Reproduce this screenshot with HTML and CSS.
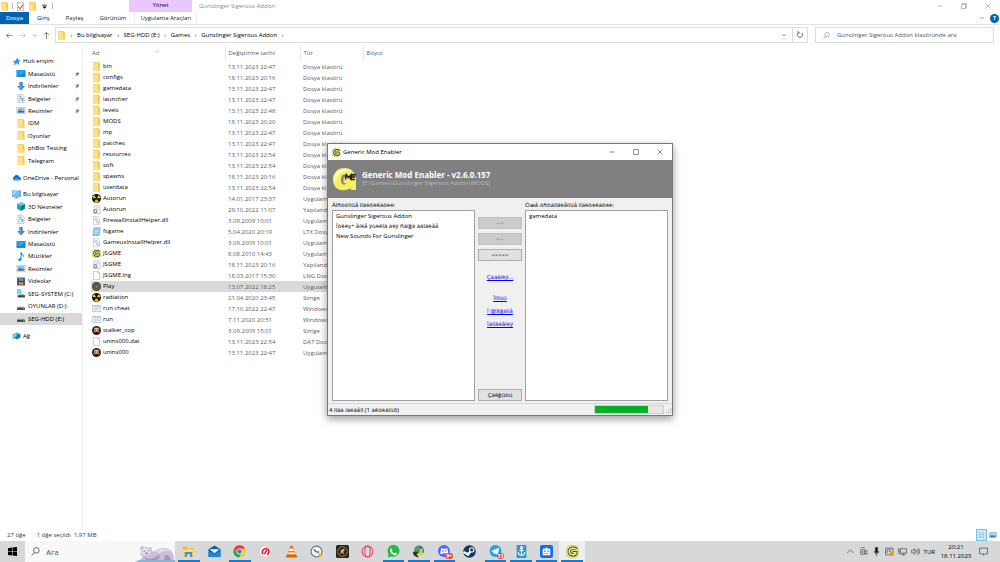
FILE: index.html
```html
<!DOCTYPE html>
<html lang="tr">
<head>
  <meta charset="UTF-8">
  <title>Gunslinger Sigerous Addon</title>
  <link rel="stylesheet" href="styles.css">
</head>
<body>
  <svg class="sprite" aria-hidden="true">
    <symbol id="folder" viewBox="0 0 16 16"><path fill="#f2c24c" d="M2 0h9l3 2v14H2z"/><path fill="#ffe08a" d="M2 1h9v15H2z"/><path fill="#ffd35c" d="M11 10h3v6h-3z"/></symbol>
    <symbol id="star" viewBox="0 0 16 16"><path fill="#2d9be0" d="M9 1l2 4 4 0-3 4 1 5-4-3-6 4 2-5-4-3 6-1z"/></symbol>
    <symbol id="desktop" viewBox="0 0 16 16"><path fill="#0a7dd1" d="M0 2h16v12H0z"/><path fill="#22a7f2" d="M1 3h14v8H1z"/><path fill="#0a8ee4" d="M8 11l7-7v7z"/></symbol>
    <symbol id="down" viewBox="0 0 16 16"><path fill="#3b82d0" d="M5 0h6v7h4l-7 8-7-8h4z"/><path fill="#64a5e8" d="M6 1h2v12L3 8h3z"/></symbol>
    <symbol id="doc" viewBox="0 0 16 16"><path fill="#fafafa" stroke="#9aa3ab" d="M2.500.5h8l3 3v12h-11z"/><path fill="#6fb1dc" d="M5 3h4v3H5zM7 7h5v6H9V9H7z"/><path stroke="#aab6c0" d="M4 8h2M4 10h3M4 12h3"/></symbol>
    <symbol id="picture" viewBox="0 0 16 16"><path fill="#fff" stroke="#9aa8b5" d="M.5 2.500h15v11H.5z"/><path fill="#7cb9e8" d="M2 4h12v4H2z"/><path fill="#3c6f9c" d="M2 9l5-2 3 2 4-1v4H2z"/></symbol>
    <symbol id="cloud" viewBox="0 0 16 16"><path fill="#0f6cbd" d="M4 13a4 4 0 010-7 5 5 0 019 1 3 3 0 010 6z"/><path fill="#2a9df0" d="M1 12l7-4 7 3-1 2H4z"/></symbol>
    <symbol id="pc" viewBox="0 0 16 16"><path fill="#6d8ca3" d="M0 1h16v11H0z"/><path fill="#65c7f7" d="M1 2h14v9H1z"/><path fill="#8fdcff" d="M1 2h9l-9 8z"/><path fill="#8a9aa5" d="M6 12h4v2h3v1H3v-1h3z"/></symbol>
    <symbol id="cube" viewBox="0 0 16 16"><path fill="#57d0e5" d="M8 0l7 3-7 4-7-4z"/><path fill="#15a3c4" d="M1 3l7 4v9l-7-4z"/><path fill="#0d6f9e" d="M15 3L8 7v9l7-4z"/></symbol>
    <symbol id="music" viewBox="0 0 16 16"><path fill="#1f95e6" d="M7 0h2c0 4 5 4 4 9h-1c0-3-2-3-3-4v8c0 4-6 4-6 1s3-3 4-3z"/></symbol>
    <symbol id="video" viewBox="0 0 16 16"><path fill="#3c4148" d="M1 1h14v14H1z"/><path fill="#5f91c9" d="M4 2h8v5H4z"/><path fill="#c98c4e" d="M4 9h8v5H4z"/><path stroke="#ddd" stroke-dasharray="1 2" d="M2.500 2v12M13.500 2v12"/></symbol>
    <symbol id="drive" viewBox="0 0 16 16"><path fill="#b8bcbf" d="M3 8h10l2 2H1z"/><path fill="#3c4246" d="M1 10h14v4H1z"/><path fill="#6be07b" d="M11 11h3v1h-3z"/></symbol>
    <symbol id="sysdrive" viewBox="0 0 16 16"><path fill="#24b2ee" d="M1 1h3v3H1zM5 1h3v3H5zM1 5h3v3H1zM5 5h3v3H5z"/><path fill="#b8bcbf" d="M4 9h9l2 2H3z"/><path fill="#3c4246" d="M2 11h13v4H2z"/></symbol>
    <symbol id="network" viewBox="0 0 16 16"><path fill="#4fa6dc" d="M1 6l8-4 2 2v8l-8 2-2-2z"/><path fill="#2479ae" d="M7 7l7-3 1 2v6l-7 3-2-2z"/><path fill="#8dd0f5" d="M2 7l6-3v5l-6 3z"/></symbol>
    <symbol id="pin" viewBox="0 0 16 16"><path fill="#7d8790" d="M9 1l6 6-2 1-3 3v3L7 11l-5 4 4-6-3-3h3l3-3z"/></symbol>
    <symbol id="rad" viewBox="0 0 16 16"><circle cx="8" cy="8" r="8" fill="#171407"/><path fill="#f2c51d" d="M8 8L1 7a7 7 0 013-5zM8 8l4-6a7 7 0 013 5zM8 8l4 6a7 7 0 01-8 0z"/><circle cx="8" cy="8" r="2" fill="#171407"/></symbol>
    <symbol id="ini" viewBox="0 0 16 16"><path fill="#fafafa" stroke="#a5a5a5" d="M3.500.5h8l3 3v12h-11z"/><circle cx="6" cy="11" r="3" fill="#ddd" stroke="#8c9195" stroke-width="2"/><path stroke="#b5b5b5" d="M6 4h6M8 6h4"/></symbol>
    <symbol id="dll" viewBox="0 0 16 16"><path fill="#fafafa" stroke="#a9b3bb" d="M2.500.5h8l3 3v12h-11z"/><circle cx="7" cy="6" r="2" fill="none" stroke="#7ea0b8"/><circle cx="10" cy="11" r="2" fill="none" stroke="#7ea0b8"/></symbol>
    <symbol id="ltx" viewBox="0 0 16 16"><path fill="#8bcbe2" stroke="#5d9cb5" d="M3.500 1.500h11l-2 14h-11z"/><path stroke="#d7f2fb" d="M4 5h8M4 8h8M3 11h8"/></symbol>
    <symbol id="blank" viewBox="0 0 16 16"><path fill="#fdfdfd" stroke="#a5a5a5" d="M2.500.5h8l3 3v12h-11z"/><path fill="none" stroke="#a5a5a5" d="M10.500.5v3h3"/></symbol>
    <symbol id="play" viewBox="0 0 16 16"><circle cx="8" cy="8" r="8" fill="#4d473b"/><circle cx="8" cy="8" r="5" fill="none" stroke="#887f69"/><circle cx="8" cy="8" r="2" fill="#9d9276"/></symbol>
    <symbol id="bat" viewBox="0 0 16 16"><path fill="#fff" stroke="#8da0ae" d="M.5 2.500h15v11H.5z"/><path fill="#b7cad8" d="M1 3h14v2H1z"/><circle cx="6" cy="9" r="2" fill="none" stroke="#7694a8"/><path stroke="#7694a8" d="M9 7h4M10 10h3"/></symbol>
    <symbol id="stalker" viewBox="0 0 16 16"><circle cx="8" cy="8" r="8" fill="#2c1f1a"/><path fill="#e8bd9b" d="M4 3h8v6l-2 2H6L4 9z"/><path fill="#1c1614" d="M5 6h2v2H5zM9 6h2v2H9zM6 10h4v4H6z"/><path fill="#c9532c" d="M1 9h3l1 4zM12 9h3l-4 4z"/></symbol>
    <symbol id="gme" viewBox="0 0 24 24"><path fill="#f6f162" d="M12 0c6 0 10 3 11 8h-8c-1-2-5-2-6 1-1 2-1 5 0 7 1 2 4 2 5 0h-3v-6h13v13h-5l-1-2C9 26 0 22 0 12 0 5 5 0 12 0z"/><path fill="#fdfbb5" d="M12 1c4 0 7 1 9 4-5-3-12-2-15 2-2 3-3 6-4 8C0 8 4 1 12 1z"/><path fill="none" stroke="#222" stroke-width="1.500" d="M13 12l1-5 2 3 3-3-1 5M24 7h-4l-1 5h4M20 9.500h3"/></symbol>
    <symbol id="gmeapp" viewBox="0 0 24 24"><rect x="1" y="1" width="22" height="22" rx="7" fill="#f3ef55" stroke="#b9b65a"/><path fill="none" stroke="#444" stroke-width="6" d="M19 8c-3-4-13-3-13 4s10 8 12 4v-2h-6"/><path fill="none" stroke="#fffcb0" stroke-width="2.500" d="M18 8c-3-3-12-3-12 4s10 7 12 4v-2h-5"/></symbol>
    <symbol id="win" viewBox="0 0 16 16"><path d="M0 2l7-1v7H0zM8 1l8-1v8H8zM0 9h7v6l-7-1zM8 9h8v7l-8-1z"/></symbol>
    <symbol id="lens" viewBox="0 0 16 16"><circle cx="9.500" cy="6" r="5" fill="none" stroke="currentColor"/><path stroke="currentColor" d="M6 10l-5 5"/></symbol>
    <symbol id="explorer" viewBox="0 0 24 24"><path fill="#f5b92e" d="M1 3h8l2 3h12v15H1z"/><path fill="#ffdd76" d="M1 8h22v13H1z"/><path fill="#3795da" d="M5 13h14v9h-4v-5H9v5H5z"/></symbol>
    <symbol id="mail" viewBox="0 0 24 24"><path fill="#0c5faa" d="M1 8l11-7 11 7v14H1z"/><path fill="#fff" d="M3 8h18l-9 7z"/><path fill="#1b86d8" d="M1 9l11 8 11-8v13H1z"/></symbol>
    <symbol id="chrome" viewBox="0 0 24 24"><circle cx="12" cy="12" r="11" fill="#f6c72c"/><path fill="#e23f32" d="M2 7a11 11 0 0120 0H12L8 14z"/><path fill="#2fa24f" d="M2 7a11 11 0 009 16l5-9-7 1z"/><circle cx="12" cy="12" r="5.500" fill="#fff"/><circle cx="12" cy="12" r="4.200" fill="#3479e4"/></symbol>
    <symbol id="redapp" viewBox="0 0 24 24"><circle cx="12" cy="12" r="10" fill="#fff" stroke="#f0c5ca"/><path fill="none" stroke="#d71f35" stroke-width="3" d="M7 17c-3-7 2-11 9-11M10 17l5-9M15 18c4-3 4-7 2-11"/></symbol>
    <symbol id="vlc" viewBox="0 0 24 24"><path fill="#ee7d13" d="M10 1h4l6 18H4z"/><path fill="#fff" d="M8.500 7h7l1 4h-9zM6.500 14h11l1 3h-13z"/><path fill="#d96508" d="M3 18h18l2 5H1z"/></symbol>
    <symbol id="clock" viewBox="0 0 24 24"><circle cx="12" cy="12" r="10" fill="#f4f8fa" stroke="#56718a" stroke-width="2"/><path fill="none" stroke="#333" stroke-width="2" d="M7 8l5 5h5"/><path fill="#efb32c" d="M16 14l7 5-5 5-3-4z"/></symbol>
    <symbol id="knight" viewBox="0 0 24 24"><rect width="24" height="24" rx="3" fill="#29231c"/><circle cx="12" cy="12" r="9" fill="none" stroke="#aa9564" stroke-width="1.500"/><path fill="#cbb77f" d="M8 8l3 1 4-3 1 4-3 3 3 4h-2l-3-3-4 4 2-6z"/></symbol>
    <symbol id="opera" viewBox="0 0 24 24"><circle cx="12" cy="12" r="10" fill="none" stroke="#e84c6c" stroke-width="2"/><ellipse cx="12" cy="12" rx="5" ry="10" fill="none" stroke="#e84c6c" stroke-width="2"/></symbol>
    <symbol id="whatsapp" viewBox="0 0 24 24"><path fill="#28b94b" d="M1 23l2-6a11 11 0 115 4z"/><path fill="#fff" d="M8 6l2 4-1 2 4 4 2-2 4 2-2 3C11 20 5 14 6 8z"/></symbol>
    <symbol id="idm" viewBox="0 0 24 24"><circle cx="13" cy="10" r="9" fill="#2a73bd"/><path fill="#56a53a" d="M5 6l7-5 3 5-5 5-6 2zM16 9l6-2-1 8-6 4z"/><path fill="#253329" d="M1 14l6-2 7 5-3 6-7-3z"/><path fill="#f5d231" d="M14 8l6-2-2 7 3 2-9 6-4-4 6-3z"/></symbol>
    <symbol id="discord" viewBox="0 0 24 24"><circle cx="11" cy="11" r="11" fill="#5865f2"/><path fill="#fff" d="M6 6l4 1h3l4-1 2 9-4 2-1-2H9l-1 2-4-2z"/><circle cx="9" cy="11" r="1.500" fill="#5865f2"/><circle cx="14" cy="11" r="1.500" fill="#5865f2"/></symbol>
    <symbol id="steam" viewBox="0 0 24 24"><circle cx="12" cy="12" r="11.500" fill="#12395f"/><circle cx="16" cy="9" r="4" fill="none" stroke="#fff" stroke-width="2"/><path fill="none" stroke="#fff" stroke-width="4" d="M1 13l8 4 5-5"/><circle cx="9" cy="17" r="3" fill="#fff"/></symbol>
    <symbol id="telegram" viewBox="0 0 24 24"><circle cx="12" cy="11" r="11" fill="#2ba1dd"/><path fill="#fff" d="M4 11l15-6-3 13-5-3-2 2-1-4z"/></symbol>
    <symbol id="anchor" viewBox="0 0 24 24"><path fill="#2b9bd6" d="M3 0h18v24H3z"/><circle cx="12" cy="5" r="2" fill="none" stroke="#fff" stroke-width="2"/><path fill="none" stroke="#fff" stroke-width="2" d="M12 7v12M8 10h8M6 13c0 8 12 8 12 0"/></symbol>
    <symbol id="bot" viewBox="0 0 24 24"><rect width="24" height="24" rx="4" fill="#176bea"/><path fill="#fff" d="M5 7h4l1-2h4l1 2h4v12H5z"/><path fill="#176bea" d="M8 10h2v3H8zM14 10h2v3h-2zM8 15h8v1H8z"/></symbol>
  </svg>

  <main class="explorer">
    <header class="titlebar">
      <div class="quick">
        <svg><use href="#folder"/></svg><i></i>
        <svg viewBox="0 0 16 16"><path fill="#fff" stroke="#888" d="M2.500 1.500h11v14h-11z"/><path fill="none" stroke="#e0563a" stroke-width="2" d="M4 8l3 4 5-7"/></svg>
        <svg><use href="#folder"/></svg>
        <svg viewBox="0 0 16 16"><path d="M4 5h8v1H4zM4 8h8l-4 4z"/></svg><i></i>
      </div>
      <div class="context">Yönet</div>
      <div class="title">Gunslinger Sigerous Addon</div>
      <div class="winbuttons">
        <button aria-label="Simge durumuna küçült"><svg viewBox="0 0 12 12"><path d="M1 6h10"/></svg></button>
        <button aria-label="Önceki boyut"><svg viewBox="0 0 12 12"><path d="M1 3h8v8H1zM3 3V1h8v8H9"/></svg></button>
        <button aria-label="Kapat"><svg viewBox="0 0 12 12"><path d="M1 1l10 10M11 1L1 11"/></svg></button>
      </div>
    </header>

    <nav class="tabs">
      <a class="file" href="#">Dosya</a>
      <a href="#">Giriş</a>
      <a href="#">Paylaş</a>
      <a href="#">Görünüm</a>
      <a class="tools" href="#">Uygulama Araçları</a>
      <span class="help"><svg viewBox="0 0 12 12"><path d="M2 4l4 4 4-4"/></svg><b>?</b></span>
    </nav>

    <div class="addressrow">
      <div class="arrows">
        <button aria-label="Geri"><svg viewBox="0 0 12 12"><path d="M11 6H1M5 2L1 6l4 4"/></svg></button>
        <button aria-label="İleri" disabled><svg viewBox="0 0 12 12"><path d="M1 6h10M7 2l4 4-4 4"/></svg></button>
        <button class="small" aria-label="Son konumlar"><svg viewBox="0 0 12 12"><path d="M2 4l4 4 4-4"/></svg></button>
        <button aria-label="Yukarı"><svg viewBox="0 0 12 12"><path d="M6 12V1M2 5l4-4 4 4"/></svg></button>
      </div>
      <div class="address">
        <svg class="icon"><use href="#folder"/></svg><span>›</span>
        <a href="#">Bu bilgisayar</a><span>›</span>
        <a href="#">SEG-HDD (E:)</a><span>›</span>
        <a href="#">Games</a><span>›</span>
        <a href="#">Gunslinger Sigerous Addon</a><span>›</span>
        <button class="drop" aria-label="Önceki konumlar"><svg viewBox="0 0 12 12"><path d="M2 4l4 4 4-4"/></svg></button>
        <button class="refresh" aria-label="Yenile"><svg viewBox="0 0 12 12"><path d="M3 3a4 4 0 106 0M3 0v3h3"/></svg></button>
      </div>
      <label class="search">
        <svg><use href="#lens"/></svg>
        <input type="text" aria-label="Ara" placeholder="Gunslinger Sigerous Addon klasöründe ara">
      </label>
    </div>

    <div class="content">
      <nav class="sidebar" id="sidebar"></nav>
      <div class="files">
        <table>
          <thead>
            <tr><th class="name">Ad<svg viewBox="0 0 12 12"><path d="M2 8l4-4 4 4"/></svg></th><th class="date">Değiştirme tarihi</th><th class="type">Tür</th><th class="size">Boyut</th></tr>
          </thead>
          <tbody id="rows"></tbody>
        </table>
      </div>
    </div>

    <footer class="status">
      <span>27 öğe</span><span>1 öğe seçildi&nbsp; 1,97 MB</span>
      <div class="views">
        <button class="on" aria-label="Ayrıntılar"><svg viewBox="0 0 16 12"><path stroke-dasharray="4 2" d="M2 2h12M2 5h12M2 8h12M2 11h12"/></svg></button>
        <button aria-label="Büyük simgeler"><svg viewBox="0 0 16 12"><path fill="#a9d7f5" d="M1 1h14v10H1z"/><path fill="#2c6da0" d="M3 7h9v3H3z"/></svg></button>
      </div>
    </footer>
  </main>

  <section class="dialog" role="dialog" aria-label="Generic Mod Enabler">
    <header class="dlgtitle">
      <svg class="appicon"><use href="#gmeapp"/></svg>
      <span>Generic Mod Enabler</span>
      <div class="winbuttons">
        <button aria-label="Küçült"><svg viewBox="0 0 12 12"><path d="M1 6h10"/></svg></button>
        <button aria-label="Büyüt"><svg viewBox="0 0 12 12"><path d="M1 1h10v10H1z"/></svg></button>
        <button aria-label="Kapat"><svg viewBox="0 0 12 12"><path d="M1 1l10 10M11 1L1 11"/></svg></button>
      </div>
    </header>
    <div class="banner">
      <svg><use href="#gme"/></svg>
      <div><h1>Generic Mod Enabler - v2.6.0.157</h1><p>[E:\Games\Gunslinger Sigerous Addon\MODS]</p></div>
    </div>
    <div class="mods">
      <div class="pane">
        <h2>Äîñòóïíûå ìîäèôèêàöèè:</h2>
        <ul>
          <li>Gunslinger Sigerous Addon</li>
          <li>Îòêëş÷ åíèå ÿùèêîâ äëÿ ñàïğà àäîäèåå</li>
          <li>New Sounds For Gunslinger</li>
        </ul>
      </div>
      <div class="actions">
        <button disabled>--&gt;</button>
        <button disabled>&lt;--</button>
        <button>&lt;&lt;&lt;&lt;&lt;</button>
        <a class="tasks" href="#">Çàäàíèÿ...</a>
        <a href="#">Ïîìîùü</a>
        <a href="#">Î ïğîãğàììå</a>
        <a href="#">Îáíîâëåíèÿ</a>
        <button class="close">Çàêğûòü</button>
      </div>
      <div class="pane">
        <h2>Óæå óñòàíîâëåííûå ìîäèôèêàöèè:</h2>
        <ul><li>gamedata</li></ul>
      </div>
    </div>
    <footer class="dlgstatus">
      <span>4 ìîäà íàéäåíî (1 àêòèâíûõ)</span>
      <div class="progress"><div></div></div>
      <svg class="grip" viewBox="0 0 8 8"><path d="M6 2h1v1H6zM4 4h1v1H4zM6 4h1v1H6zM2 6h1v1H2zM4 6h1v1H4zM6 6h1v1H6z"/></svg>
    </footer>
  </section>

  <footer class="taskbar">
    <button class="start" aria-label="Başlat"><svg><use href="#win"/></svg></button>
    <label class="tasksearch">
      <svg class="lens"><use href="#lens"/></svg>
      <input type="text" aria-label="Windows'ta ara" placeholder="Ara">
      <svg class="bear" viewBox="0 0 80 36"><path fill="#8fb3cf" d="M0 36c14-10 58-13 80-4v4z"/><path fill="#c9bfd6" d="M10 8c2-5 6-5 8-2 4-1 7-1 9 1 4-3 8 0 6 4l4 5c12-11 32-11 38 2 3 6 4 11 2 14H24c-10 2-13-4-8-7-5-2-7-9-4-13z"/><path fill="#e2dcea" d="M13 10c5-5 15-4 19 3l-2 7c-6 4-16 3-18-3zM42 14c10-7 22-6 28 1-9-2-17 0-22 5z"/><path fill="#a496b8" d="M18 27c12 5 24 2 30-6 3 5 1 9-6 11H22zM60 22c8 0 12 5 11 10H58z"/><path fill="none" stroke="#44374f" d="M17 14l3 1M26 14l3-1M21 18h4l-2 2z"/></svg>
    </label>
    <div class="apps" id="apps"></div>
    <div class="tray">
      <svg viewBox="0 0 16 16"><path d="M2 11l6-6 6 6"/></svg>
      <svg viewBox="0 0 16 16"><path d="M3 5h7v8H3zM10 8l4-2v7l-4-2M3 2c2-2 5-2 7 0"/><circle cx="6.500" cy="9" r="1"/></svg>
      <svg viewBox="0 0 16 16"><path fill="#111" d="M6 1h4v9H6z"/><path d="M4 7c0 7 8 7 8 0M8 12v4"/></svg>
      <svg viewBox="0 0 16 16"><path d="M1 2h13v12H1zM4 11V5h7M7 8h3"/><circle class="dot" cx="12" cy="12" r="4"/></svg>
      <svg viewBox="0 0 16 16"><path d="M4 3h11v8H4zM9 11v3M6 14h7M1 2v5h3M2 7v7"/></svg>
      <svg viewBox="0 0 16 16"><path d="M1 6h2l4-3v10l-4-3H1zM9 6c1 1 1 3 0 4M11 4c2 2 2 6 0 8M13 2c3 4 3 8 0 12"/></svg>
      <span class="lang">TUR</span>
      <time>20:21<br>18.11.2023</time>
      <svg class="note" viewBox="0 0 16 16"><path d="M1 2h14v10h-4l-3 3v-3H1z"/></svg>
    </div>
  </footer>

  <script>
    const groups = [
      ["quickaccess", ["star", "Hızlı erişim"], ["desktop", "Masaüstü", 1], ["down", "İndirilenler", 1], ["doc", "Belgeler", 1], ["picture", "Resimler", 1], ["folder", "IDM"], ["folder", "Oyunlar"], ["folder", "phBot Testing"], ["folder", "Telegram"]],
      ["single", ["cloud", "OneDrive - Personal"]],
      ["computer", ["pc", "Bu bilgisayar"], ["cube", "3D Nesneler"], ["doc", "Belgeler"], ["down", "İndirilenler"], ["desktop", "Masaüstü"], ["music", "Müzikler"], ["picture", "Resimler"], ["video", "Videolar"], ["sysdrive", "SEG-SYSTEM (C:)"], ["drive", "OYUNLAR (D:)"], ["drive", "SEG-HDD (E:)"]],
      ["single", ["network", "Ağ"]]
    ];

    const folder = "Dosya klasörü";
    const files = [
      ["folder", "bin", "13.11.2023 22:47", folder],
      ["folder", "configs", "18.11.2023 20:16", folder],
      ["folder", "gamedata", "13.11.2023 22:47", folder],
      ["folder", "launcher", "13.11.2023 22:47", folder],
      ["folder", "levels", "13.11.2023 22:48", folder],
      ["folder", "MODS", "18.11.2023 20:20", folder],
      ["folder", "mp", "13.11.2023 22:47", folder],
      ["folder", "patches", "13.11.2023 22:47", folder],
      ["folder", "resources", "13.11.2023 22:54", folder],
      ["folder", "soft", "13.11.2023 22:54", folder],
      ["folder", "spawns", "18.11.2023 20:16", folder],
      ["folder", "userdata", "13.11.2023 22:54", folder],
      ["rad", "Autorun", "14.01.2017 23:37", "Uygulama"],
      ["ini", "Autorun", "29.10.2022 11:07", "Yapılandırma"],
      ["dll", "FirewallInstallHelper.dll", "3.09.2009 10:01", "Uygulama"],
      ["ltx", "fsgame", "5.04.2020 20:19", "LTX Dosyası"],
      ["dll", "GameuxInstallHelper.dll", "3.09.2009 10:01", "Uygulama"],
      ["gmeapp", "JSGME", "8.08.2010 14:43", "Uygulama"],
      ["ini", "JSGME", "18.11.2023 20:16", "Yapılandırma"],
      ["blank", "JSGME.lng", "18.03.2017 15:30", "LNG Dosyası"],
      ["play", "Play", "13.07.2022 18:25", "Uygulama"],
      ["rad", "radiation", "21.04.2020 23:45", "Simge"],
      ["bat", "run cheat", "17.10.2022 22:47", "Windows"],
      ["bat", "run", "7.11.2020 20:51", "Windows"],
      ["stalker", "stalker_cop", "3.09.2009 15:01", "Simge"],
      ["blank", "unins000.dat", "13.11.2023 22:54", "DAT Dosyası"],
      ["stalker", "unins000", "13.11.2023 22:47", "Uygulama"]
    ];

    // [icon, running, badge]
    const apps = [
      ["explorer", 1], ["mail"], ["chrome", 1], ["redapp"], ["vlc"], ["clock"], ["knight"], ["opera"],
      ["whatsapp", 1], ["idm", 1], ["discord", 1, "9+"], ["steam"], ["telegram", 1, "33"], ["anchor", 1], ["bot", 1], ["gmeapp", 1]
    ];

    const icon = name => `<svg class="icon"><use href="#${name}"/></svg>`;

    document.getElementById("sidebar").innerHTML = groups.map(([cls, ...items]) =>
      `<div class="group ${cls}">` + items.map(([ic, text, pinned], i) =>
        `<a href="#" class="${i ? "child" : ""} ${text === "SEG-HDD (E:)" ? "selected" : ""}">${icon(ic)}${text}${pinned ? '<svg class="pin"><use href="#pin"/></svg>' : ""}</a>`
      ).join("") + "</div>").join("");

    document.getElementById("rows").innerHTML = files.map(([ic, name, date, type]) =>
      `<tr class="${name === "Play" ? "selected" : ""}"><td class="name">${icon(ic)}${name}</td><td>${date}</td><td>${type}</td><td></td></tr>`
    ).join("");

    document.getElementById("apps").innerHTML = apps.map(([ic, running, badge]) =>
      `<button aria-label="${ic}" class="${running ? "running" : ""} ${ic === "gmeapp" ? "active" : ""}"><svg><use href="#${ic}"/></svg>${badge ? `<b>${badge}</b>` : ""}</button>`
    ).join("");
  </script>
</body>
</html>
```
FILE: styles.css
```css
* {
  box-sizing: border-box;
}

body {
  margin: 0;
  min-height: 100vh;
  display: flex;
  flex-direction: column;
  background: #fff;
  color: #000;
  font-family: "Open Sans", "Noto Sans", sans-serif;
  font-size: 6px;
  line-height: 8px;
  white-space: nowrap;
}

a {
  color: inherit;
  text-decoration: none;
}

button,
input {
  margin: 0;
  padding: 0;
  border: 0;
  background: none;
  color: inherit;
  font: inherit;
}

svg {
  display: block;
  flex: none;
}

.sprite {
  position: absolute;
  width: 0;
  height: 0;
}

.icon {
  width: 9px;
  height: 9px;
}

.explorer {
  flex: 1;
  display: flex;
  flex-direction: column;
}

/* title bar and ribbon */
.titlebar {
  display: flex;
  height: 12px;
  align-items: center;
}

.quick {
  width: 129px;
  display: flex;
  align-items: center;
  gap: 3px;
}

.quick svg {
  width: 9px;
  height: 9px;
}

.quick i {
  width: 1px;
  height: 6px;
  background: #bbb;
}

.context {
  width: 63px;
  height: 12px;
  line-height: 11px;
  text-align: center;
  background: #e9c9fd;
}

.title {
  flex: 1;
  padding-left: 7px;
  color: #8a8a8a;
}

.winbuttons {
  display: flex;
}

.winbuttons button {
  width: 24px;
  height: 12px;
  display: grid;
  place-items: center;
}

.winbuttons svg,
.help svg,
.arrows svg,
.address button svg,
th svg {
  width: 6px;
  height: 6px;
  fill: none;
  stroke: #777;
}

.tabs {
  display: flex;
  height: 13px;
  align-items: stretch;
  border-bottom: 1px solid #e4e4e4;
  color: #222;
  line-height: 12px;
}

.tabs a {
  padding: 0 8px;
}

.tabs .file {
  width: 29px;
  padding: 0;
  text-align: center;
  background: #0063b1;
  color: #fff;
}

.tabs .tools {
  width: 63px;
  padding: 0;
  text-align: center;
  border: solid #eee;
  border-width: 0 1px;
}

.help {
  margin-left: auto;
  padding-right: 1px;
  display: flex;
  align-items: center;
  gap: 5px;
}

.help b {
  width: 9px;
  height: 9px;
  border-radius: 50%;
  background: #0063b1;
  color: #fff;
  line-height: 9px;
  text-align: center;
}

.addressrow {
  display: flex;
  padding: 2px 6px 2px 0;
}

.arrows {
  width: 55px;
  padding-left: 6px;
  display: flex;
  align-items: center;
  gap: 6px;
}

.arrows svg {
  width: 7px;
  height: 7px;
  stroke: #333;
}

.arrows .small svg {
  width: 5px;
}

.arrows button:disabled {
  opacity: 0.4;
}

.address {
  flex: 1;
  height: 16px;
  padding-left: 1px;
  display: flex;
  align-items: center;
  border: 1px solid #ddd;
}

.address span {
  width: 11px;
  text-align: center;
}

.drop {
  margin-left: auto;
  padding: 0 5px;
}

.address button.drop svg {
  stroke: #333;
}

.refresh {
  height: 14px;
  padding: 0 3px;
  border-left: 1px solid #ddd;
}

.address .refresh svg {
  width: 8px;
  height: 8px;
  stroke: #333;
}

.search {
  width: 179px;
  height: 16px;
  margin-left: 7px;
  padding-left: 7px;
  display: flex;
  align-items: center;
  gap: 7px;
  border: 1px solid #ddd;
  color: #555;
}

.search svg {
  width: 7px;
  height: 7px;
}

.search input {
  flex: 1;
  min-width: 0;
}

input::placeholder {
  color: #555;
  opacity: 1;
}

/* navigation pane */
.content {
  flex: 1;
  display: flex;
}

.sidebar {
  width: 83px;
  padding-top: 10px;
  border-right: 1px solid #f0f0f0;
}

.group {
  display: grid;
  grid-auto-rows: 1fr;
  margin-bottom: 4px;
}

.quickaccess {
  height: 112px;
}

.computer {
  height: 137px;
}

.single {
  height: 13px;
}

.group a {
  padding-left: 12px;
  display: flex;
  align-items: center;
  gap: 2px;
}

.group .child {
  padding-left: 16px;
}

.child .icon {
  width: 10px;
}

.pin {
  width: 6px;
  height: 6px;
  margin-left: auto;
  margin-right: 2px;
}

.selected {
  background: #d9d9d9;
}

/* file list */
.files {
  flex: 1;
  padding-left: 8px;
}

table {
  table-layout: fixed;
  width: 354px;
  border-collapse: collapse;
}

th,
td {
  height: 11px;
  padding: 0 0 0 3px;
  text-align: left;
  color: #606060;
}

th {
  height: 16px;
  color: #4c607a;
  font-weight: normal;
  border-right: 1px solid #e8e8e8;
}

th.name {
  width: 134px;
  padding-left: 1px;
}

th.name svg {
  float: right;
  width: 5px;
  height: 5px;
  margin-right: 65px;
}

th.date {
  width: 75px;
}

th.type {
  width: 63px;
}

th.size {
  border-right: 0;
}

td.name {
  padding-left: 1px;
  color: #000;
}

td .icon {
  float: left;
  margin-right: 2px;
}

.status {
  display: flex;
  align-items: center;
  gap: 11px;
  height: 13px;
  padding: 0 2px 0 7px;
  color: #1e395b;
}

.views {
  margin-left: auto;
  display: flex;
}

.views button {
  width: 11px;
  height: 12px;
  display: grid;
  place-items: center;
}

.views .on {
  border: 1px solid #70c0e7;
  background: #cce8f7;
}

.views svg {
  width: 8px;
  height: 6px;
  stroke: #7c96a8;
}

/* Generic Mod Enabler window */
.dialog {
  position: absolute;
  left: 327px;
  top: 143px;
  width: 346px;
  border: 1px solid #777;
  background: #f0f0f0;
  box-shadow: 0 3px 8px rgba(0, 0, 0, 0.4);
}

.dlgtitle {
  height: 16px;
  padding-left: 4px;
  display: flex;
  align-items: center;
  gap: 2px;
  background: #fff;
}

.dlgtitle span {
  flex: 1;
}

.dlgtitle svg.appicon {
  width: 9px;
  height: 9px;
}

.dlgtitle .winbuttons svg {
  stroke: #222;
}

.banner {
  height: 38px;
  padding-left: 5px;
  display: flex;
  align-items: center;
  gap: 6px;
  background: #808080;
  color: #b9b9b9;
}

.banner svg {
  width: 23px;
  height: 23px;
}

.banner h1 {
  margin: 0;
  font-size: 8px;
  line-height: 9px;
  color: #fff;
}

.banner p {
  margin: 0 0 2px;
}

.mods {
  display: flex;
  gap: 2px;
  padding: 3px 4px 2px;
}

.pane {
  flex: 1;
  display: flex;
  flex-direction: column;
}

.pane h2 {
  margin: 0;
  font-size: 6px;
  font-weight: normal;
  line-height: 9px;
}

.pane ul {
  flex: 1;
  margin: 0;
  padding: 0 3px;
  list-style: none;
  line-height: 10px;
  border: 1px solid #a0a0a8;
  background: #fff;
}

.actions {
  width: 46px;
  height: 200px;
  padding: 16px 1px 0;
  display: flex;
  flex-direction: column;
  align-items: center;
  gap: 4px;
}

.actions button {
  width: 100%;
  height: 12px;
  flex: none;
  border: 1px solid #adadad;
  background: #e1e1e1;
  line-height: 10px;
}

.actions button:disabled {
  border-color: #bfbfbf;
  background: #ccc;
  color: #777;
}

.actions a {
  color: #00f;
  line-height: 9px;
  text-decoration: underline;
}

.actions .tasks {
  margin: 8px 0;
}

.actions .close {
  margin-top: auto;
}

.dlgstatus {
  height: 12px;
  padding-left: 1px;
  display: flex;
  align-items: center;
  border-top: 1px solid #d7d7d7;
}

.progress {
  width: 70px;
  height: 9px;
  margin-left: auto;
  border: 1px solid #d0d0d0;
  background: #e6e6e6;
}

.progress div {
  width: 78%;
  height: 100%;
  background: #06b025;
}

.grip {
  width: 8px;
  height: 8px;
  fill: #aaa;
}

/* taskbar */
.taskbar {
  height: 21px;
  display: flex;
  background: #d6d8da;
}

.start {
  width: 25px;
  display: grid;
  place-items: center;
}

.start svg {
  width: 9px;
  height: 9px;
}

.tasksearch {
  width: 150px;
  padding-left: 6px;
  display: flex;
  align-items: center;
  gap: 6px;
  background: #f8f8f8;
  font-size: 8px;
}

.tasksearch input {
  flex: 1;
  min-width: 0;
}

.lens {
  width: 9px;
  height: 9px;
}

.bear {
  width: 40px;
  height: 18px;
  align-self: flex-end;
}

.apps {
  width: 409px;
  margin-left: 1px;
  display: grid;
  grid-template-columns: repeat(16, 1fr);
}

.apps button {
  position: relative;
  display: grid;
  place-items: center;
}

.apps svg {
  width: 13px;
  height: 13px;
}

.apps .active {
  background: #eceeef;
}

.apps .running::after {
  content: "";
  position: absolute;
  left: 2px;
  right: 2px;
  bottom: 0;
  height: 2px;
  background: #1979ca;
}

.apps b {
  position: absolute;
  right: 4px;
  bottom: 3px;
  padding: 0 1px;
  border-radius: 4px;
  background: #e8403c;
  color: #fff;
  font-size: 5px;
  line-height: 6px;
}

.tray {
  margin-left: auto;
  padding-right: 12px;
  display: flex;
  align-items: center;
  gap: 4px;
}

.tray svg {
  width: 9px;
  height: 9px;
  fill: none;
  stroke: #222;
}

.tray .dot {
  fill: #f7941d;
  stroke: none;
}

.tray time {
  width: 34px;
  line-height: 9px;
  text-align: center;
}

.tray .note {
  margin-left: 2px;
}
```
